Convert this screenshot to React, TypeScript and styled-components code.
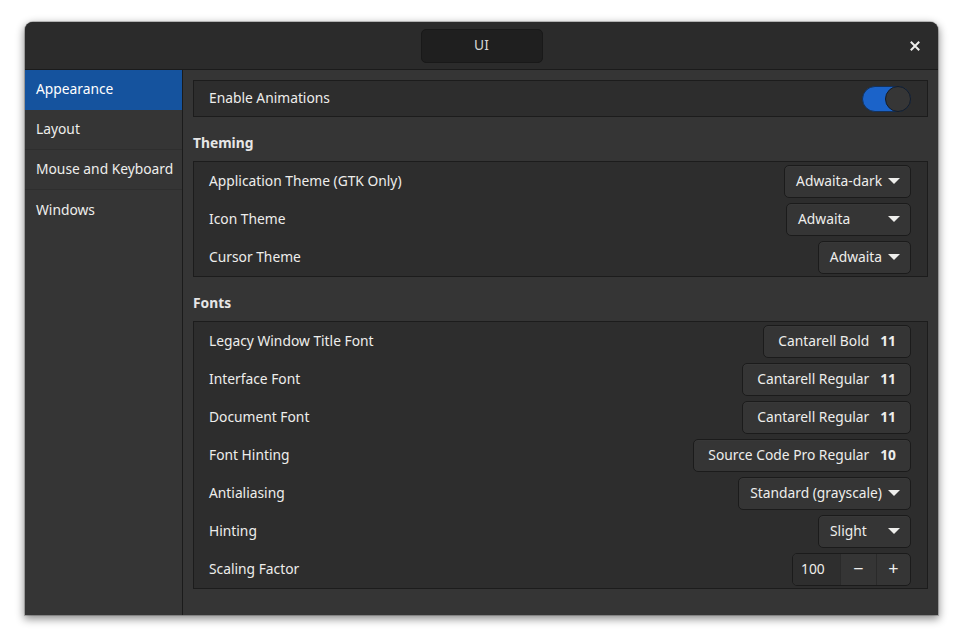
import React from 'react';
import styled, { createGlobalStyle } from 'styled-components';

const GlobalStyle = createGlobalStyle`
  html, body {
    margin: 0;
    padding: 0;
    background: #ffffff;
  }
  body {
    font-family: 'Noto Sans', 'Open Sans', sans-serif;
    font-size: 13.8px;
    color: #eeeeec;
  }
  * {
    box-sizing: border-box;
  }
`;

const Page = styled.div`
  width: 963px;
  height: 643px;
  padding: 22px 25px 28px 25px;
  display: flex;
`;

const Window = styled.div`
  width: 913px;
  height: 593px;
  display: flex;
  flex-direction: column;
  background: #353535;
  border-radius: 8px 8px 0 0;
  overflow: hidden;
  box-shadow: 0 3px 9px 1px rgba(0, 0, 0, 0.45), 0 0 0 1px rgba(0, 0, 0, 0.2);
`;

const HeaderBar = styled.div`
  height: 48px;
  flex-shrink: 0;
  display: flex;
  align-items: center;
  justify-content: center;
  position: relative;
  background: #2b2b2b;
  border-bottom: 1px solid #1b1b1b;
`;

const TitleBox = styled.div`
  width: 122px;
  height: 34px;
  display: flex;
  align-items: center;
  justify-content: center;
  padding-bottom: 2px;
  background: #1f1f1f;
  border: 1px solid #191919;
  border-radius: 5px;
  color: #d6d6d6;
`;

const CloseButton = styled.button`
  position: absolute;
  right: 15px;
  top: 16px;
  width: 16px;
  height: 16px;
  padding: 0;
  border: none;
  background: transparent;
  display: flex;
  align-items: center;
  justify-content: center;
`;

const Body = styled.div`
  flex: 1;
  display: flex;
  min-height: 0;
`;

const Sidebar = styled.nav`
  width: 158px;
  flex-shrink: 0;
  background: #353535;
  border-right: 1px solid #1b1b1b;
  display: flex;
  flex-direction: column;
`;

const SidebarItem = styled.div<{ $active?: boolean }>`
  height: 40px;
  display: flex;
  align-items: center;
  padding: 0 0 2px 11px;
  background: ${(p) => (p.$active ? '#15539e' : 'transparent')};
  color: ${(p) => (p.$active ? '#ffffff' : '#eeeeec')};
  border-bottom: 1px solid ${(p) => (p.$active ? '#15539e' : '#2e2e2e')};
  &:last-child {
    border-bottom: none;
  }
`;

const Content = styled.main`
  flex: 1;
  padding: 10px;
  display: flex;
  flex-direction: column;
`;

const Frame = styled.div`
  background: #2d2d2d;
  border: 1px solid #1c1c1c;
  display: flex;
  flex-direction: column;
`;

const Row = styled.div<{ $height?: number }>`
  height: ${(p) => p.$height ?? 38}px;
  display: flex;
  align-items: center;
  justify-content: space-between;
  padding: 0 16px 0 15px;
`;

const Label = styled.span`
  color: #eeeeec;
  padding-bottom: 2px;
`;

const SectionTitle = styled.div`
  font-weight: bold;
  margin: 16px 0 7px 0;
  line-height: 20px;
  padding-bottom: 1px;
  color: #e6e6e6;
`;

const Button = styled.div<{ $minWidth?: number; $padL?: number; $padR?: number; $gap?: number }>`
  height: 33px;
  min-width: ${(p) => p.$minWidth ?? 0}px;
  white-space: nowrap;
  display: flex;
  align-items: center;
  justify-content: space-between;
  gap: ${(p) => p.$gap ?? 6}px;
  padding: 0 ${(p) => p.$padR ?? 10}px 1px ${(p) => p.$padL ?? 11}px;
  background: #353535;
  border: 1px solid #1b1b1b;
  border-radius: 5px;
  color: #eeeeec;
  box-shadow: inset 0 1px rgba(255, 255, 255, 0.02);
`;

const FontSize = styled.span`
  font-weight: bold;
`;

const Arrow = styled.span`
  width: 0;
  height: 0;
  border-left: 6px solid transparent;
  border-right: 6px solid transparent;
  border-top: 6px solid #eeeeec;
  margin-top: 1px;
`;

const Switch = styled.div<{ $on: boolean }>`
  width: 49px;
  height: 26px;
  border-radius: 13px;
  background: ${(p) => (p.$on ? '#1b63c9' : '#2a2a2a')};
  border: 1px solid #14325c;
  display: flex;
  justify-content: ${(p) => (p.$on ? 'flex-end' : 'flex-start')};
`;

const Knob = styled.div`
  width: 26px;
  height: 26px;
  margin: -1px;
  border-radius: 50%;
  background: #363636;
  border: 1px solid #141c28;
`;

const SpinBox = styled.div`
  height: 33px;
  display: flex;
  background: #353535;
  border: 1px solid #1b1b1b;
  border-radius: 5px;
  overflow: hidden;
`;

const SpinValue = styled.div`
  width: 47px;
  display: flex;
  align-items: center;
  padding: 0 0 1px 8px;
  background: #2e2e2e;
`;

const SpinStep = styled.div<{ $w: number }>`
  width: ${(p) => p.$w}px;
  display: flex;
  align-items: center;
  justify-content: center;
  border-left: 1px solid #2a2a2a;
  font-size: 18px;
  padding-bottom: 2px;
`;

const Combo: React.FC<{ value: string; minWidth?: number }> = ({ value, minWidth }) => (
  <Button $minWidth={minWidth}>
    <span>{value}</span>
    <Arrow />
  </Button>
);

const FontButton: React.FC<{ name: string; size: number }> = ({ name, size }) => (
  <Button $padL={14} $padR={14} $gap={11}>
    <span>{name}</span>
    <FontSize>{size}</FontSize>
  </Button>
);

const CloseIcon = () => (
  <svg width="10" height="10" viewBox="0 0 10 10">
    <path d="M1.5 1.5 L8.5 8.5 M8.5 1.5 L1.5 8.5" stroke="#eeeeec" strokeWidth="2" strokeLinecap="square" />
  </svg>
);

const sidebarItems = ['Appearance', 'Layout', 'Mouse and Keyboard', 'Windows'];

const App: React.FC = () => (
  <>
    <GlobalStyle />
    <Page>
      <Window>
        <HeaderBar>
          <TitleBox>UI</TitleBox>
          <CloseButton aria-label="Close">
            <CloseIcon />
          </CloseButton>
        </HeaderBar>
        <Body>
          <Sidebar>
            {sidebarItems.map((item, i) => (
              <SidebarItem key={item} $active={i === 0}>
                {item}
              </SidebarItem>
            ))}
          </Sidebar>
          <Content>
            <Frame>
              <Row $height={35}>
                <Label>Enable Animations</Label>
                <Switch $on>
                  <Knob />
                </Switch>
              </Row>
            </Frame>

            <SectionTitle>Theming</SectionTitle>
            <Frame>
              <Row>
                <Label>Application Theme (GTK Only)</Label>
                <Combo value="Adwaita-dark" minWidth={126} />
              </Row>
              <Row>
                <Label>Icon Theme</Label>
                <Combo value="Adwaita" minWidth={125} />
              </Row>
              <Row>
                <Label>Cursor Theme</Label>
                <Combo value="Adwaita" />
              </Row>
            </Frame>

            <SectionTitle>Fonts</SectionTitle>
            <Frame>
              <Row>
                <Label>Legacy Window Title Font</Label>
                <FontButton name="Cantarell Bold" size={11} />
              </Row>
              <Row>
                <Label>Interface Font</Label>
                <FontButton name="Cantarell Regular" size={11} />
              </Row>
              <Row>
                <Label>Document Font</Label>
                <FontButton name="Cantarell Regular" size={11} />
              </Row>
              <Row>
                <Label>Font Hinting</Label>
                <FontButton name="Source Code Pro Regular" size={10} />
              </Row>
              <Row>
                <Label>Antialiasing</Label>
                <Combo value="Standard (grayscale)" />
              </Row>
              <Row>
                <Label>Hinting</Label>
                <Combo value="Slight" minWidth={93} />
              </Row>
              <Row>
                <Label>Scaling Factor</Label>
                <SpinBox>
                  <SpinValue>100</SpinValue>
                  <SpinStep $w={36}>−</SpinStep>
                  <SpinStep $w={34}>+</SpinStep>
                </SpinBox>
              </Row>
            </Frame>
          </Content>
        </Body>
      </Window>
    </Page>
  </>
);

export default App;
